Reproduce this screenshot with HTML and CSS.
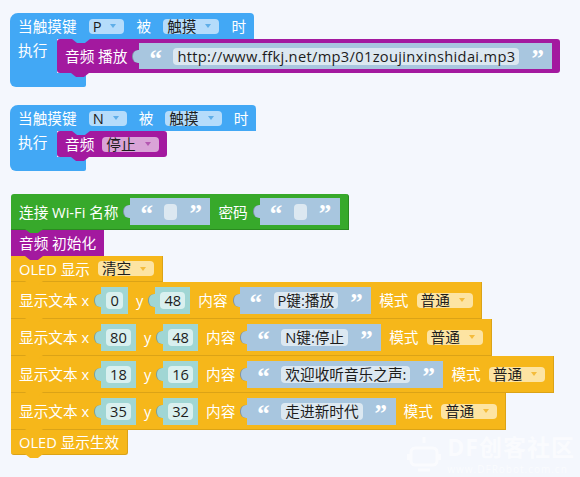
FILE: index.html
```html
<!DOCTYPE html>
<html lang="zh-CN">
  <head>
    <meta charset="UTF-8" />
    <meta name="viewport" content="width=device-width, initial-scale=1.0" />
    <title>Mind+ 触摸音乐播放</title>
    <link rel="stylesheet" href="styles.css">
  </head>
  <body>
    <div class="workspace">
      <!-- 触摸键 P：播放 mp3 -->
      <div class="c-block event">
        <div class="c-head tab">
          <span>当触摸键</span>
          <span class="dropdown">P<i class="arrow"></i></span>
          <span>被</span>
          <span class="dropdown">触摸<i class="arrow"></i></span>
          <span>时</span>
        </div>
        <div class="c-body">
          <div class="c-label">执行</div>
          <div class="block audio tall tab">
            <span>音频 播放</span>
            <span class="slot text">
              <span class="quote">“</span>
              <span class="field url">http://www.ffkj.net/mp3/01zoujinxinshidai.mp3</span>
              <span class="quote">”</span>
            </span>
          </div>
        </div>
        <div class="c-foot"></div>
      </div>

      <!-- 触摸键 N：停止 -->
      <div class="c-block event second">
        <div class="c-head tab">
          <span>当触摸键</span>
          <span class="dropdown">N<i class="arrow"></i></span>
          <span>被</span>
          <span class="dropdown">触摸<i class="arrow"></i></span>
          <span>时</span>
        </div>
        <div class="c-body">
          <div class="c-label">执行</div>
          <div class="block audio tab">
            <span>音频</span>
            <span class="dropdown">停止<i class="arrow"></i></span>
          </div>
        </div>
        <div class="c-foot"></div>
      </div>

      <!-- 初始化 -->
      <div class="stack">
        <div class="block wifi tab">
          <span>连接 Wi-Fi 名称</span>
          <span class="slot text">
            <span class="quote">“</span>
            <span class="field empty"></span>
            <span class="quote">”</span>
          </span>
          <span>密码</span>
          <span class="slot text">
            <span class="quote">“</span>
            <span class="field empty"></span>
            <span class="quote">”</span>
          </span>
        </div>
        <div class="block audio tab">
          <span>音频 初始化</span>
        </div>
        <div class="block oled tab">
          <span>OLED 显示</span>
          <span class="dropdown">清空<i class="arrow"></i></span>
        </div>
        <div class="block oled row tab">
          <span>显示文本 x</span>
          <span class="slot num"><span class="field">0</span></span>
          <span>y</span>
          <span class="slot num"><span class="field">48</span></span>
          <span>内容</span>
          <span class="slot text">
            <span class="quote">“</span>
            <span class="field">P键:播放</span>
            <span class="quote">”</span>
          </span>
          <span>模式</span>
          <span class="dropdown">普通<i class="arrow"></i></span>
        </div>
        <div class="block oled row tab">
          <span>显示文本 x</span>
          <span class="slot num"><span class="field">80</span></span>
          <span>y</span>
          <span class="slot num"><span class="field">48</span></span>
          <span>内容</span>
          <span class="slot text">
            <span class="quote">“</span>
            <span class="field">N键:停止</span>
            <span class="quote">”</span>
          </span>
          <span>模式</span>
          <span class="dropdown">普通<i class="arrow"></i></span>
        </div>
        <div class="block oled row tab">
          <span>显示文本 x</span>
          <span class="slot num"><span class="field">18</span></span>
          <span>y</span>
          <span class="slot num"><span class="field">16</span></span>
          <span>内容</span>
          <span class="slot text">
            <span class="quote">“</span>
            <span class="field">欢迎收听音乐之声:</span>
            <span class="quote">”</span>
          </span>
          <span>模式</span>
          <span class="dropdown">普通<i class="arrow"></i></span>
        </div>
        <div class="block oled row tab">
          <span>显示文本 x</span>
          <span class="slot num"><span class="field">35</span></span>
          <span>y</span>
          <span class="slot num"><span class="field">32</span></span>
          <span>内容</span>
          <span class="slot text">
            <span class="quote">“</span>
            <span class="field">走进新时代</span>
            <span class="quote">”</span>
          </span>
          <span>模式</span>
          <span class="dropdown">普通<i class="arrow"></i></span>
        </div>
        <div class="block oled tab">
          <span>OLED 显示生效</span>
        </div>
      </div>
    </div>

    <div class="watermark">
      <svg class="logo" width="34" height="36" viewBox="0 0 34 36">
        <path d="M17 1v6M8 12h18a4 4 0 0 1 4 4v9a4 4 0 0 1-4 4H8a4 4 0 0 1-4-4v-9a4 4 0 0 1 4-4zM1 18v6M33 18v6M11 34h12" fill="none" stroke="#fff" stroke-width="3"/>
      </svg>
      <div class="wm-text">
        <div class="wm-title">DF创客社区</div>
        <div class="wm-url">www.DFRobot.com.cn</div>
      </div>
    </div>
  </body>
</html>
```

FILE: styles.css
```css
* {
  box-sizing: border-box;
}
body {
  margin: 0;
  height: 477px;
  overflow: hidden;
  position: relative;
  background: #f4f7fd;
  font-family: "Open Sans", "Noto Sans CJK SC", sans-serif;
  font-size: 11pt;
  line-height: 20px;
}
.workspace {
  display: flex;
  flex-direction: column;
  align-items: flex-start;
  padding: 13px 0 0 10px;
}

/* blocks */
.block,
.c-head {
  position: relative;
  display: flex;
  align-items: center;
  gap: 8px;
  padding: 0 8px;
  color: #fff;
  white-space: nowrap;
}
.tab::after {
  content: "";
  position: absolute;
  z-index: 1;
  left: 14px;
  bottom: -4px;
  width: 18px;
  height: 4px;
  background: inherit;
  clip-path: polygon(0 0, 100% 0, 72% 100%, 28% 100%);
}

/* hat + C shape */
.c-block {
  display: flex;
  flex-direction: column;
  align-items: flex-start;
}
.c-block.second {
  margin-top: 18px;
}
.c-head {
  height: 26px;
  gap: 12px;
  background: #42a8f5;
  border-radius: 8px 4px 0 0;
}
.c-head.tab::after {
  left: 62px;
}
.c-body {
  display: flex;
  align-items: flex-start;
}
.c-label {
  align-self: stretch;
  width: 47px;
  padding: 1px 0 0 8px;
  background: #42a8f5;
  color: #fff;
}
.c-foot {
  width: 76px;
  height: 14px;
  background: #42a8f5;
  border-radius: 0 0 2px 6px;
}

/* colours per category */
.audio {
  height: 26px;
  background: #a3199f;
  border-radius: 3px;
}
.audio.tall {
  height: 34px;
}
.stack {
  display: flex;
  flex-direction: column;
  align-items: flex-start;
  margin: 23px 0 0 1px;
}
.wifi {
  height: 36px;
  background: #37a92b;
  border-right: 1px solid #2a8a20;
  border-bottom: 1px solid #2a8a20;
  border-radius: 3px 3px 0 0;
}
.stack .audio {
  border-radius: 0;
}
.oled {
  height: 26px;
  background: #f6b71a;
  border-right: 1px solid #dba317;
  border-bottom: 1px solid #dba317;
}
.oled.row {
  height: 37px;
}
.oled:last-child {
  height: 25px;
  border-radius: 0 0 3px 3px;
}

/* dropdown fields */
.dropdown {
  display: flex;
  align-items: center;
  gap: 9px;
  height: 15px;
  line-height: 15px;
  padding: 0 8px 0 4px;
  border-radius: 4px;
  color: #1c1c1c;
}
.arrow {
  width: 0;
  height: 0;
  border-left: 3px solid transparent;
  border-right: 3px solid transparent;
  border-top: 4px solid;
}
.event .dropdown {
  background: #b5dcfb;
}
.event .arrow {
  color: #5faee8;
}
.audio .dropdown {
  background: #d9a3d7;
}
.audio .arrow {
  color: #b458b1;
}
.oled .dropdown {
  background: #fde4a2;
}
.oled .arrow {
  color: #f4bc3c;
}

/* value inputs */
.slot {
  position: relative;
  display: flex;
  align-items: center;
  height: 27px;
  margin-left: 4px;
}
.slot::before {
  content: "";
  position: absolute;
  left: -7px;
  top: 7px;
  width: 8px;
  height: 13px;
  background: inherit;
  border-left: 1px solid rgba(0, 0, 0, 0.25);
  border-radius: 6px 0 0 6px;
}
.audio .slot {
  height: 26px;
}
.slot.text {
  gap: 12px;
  padding: 0 9px 0 10px;
  background: #a8c6df;
}
.slot.num {
  padding: 0 5px;
  background: #a0d6d4;
}
.field {
  height: 17px;
  line-height: 17px;
  padding: 0 4px;
  border-radius: 4px;
  background: #dce8f1;
  color: #1c1c1c;
  text-align: center;
}
.field.url {
  letter-spacing: 0.32px;
}
.num .field {
  min-width: 17px;
  background: #d9f0ef;
}
.field.empty {
  width: 13px;
  height: 16px;
  padding: 0;
}
.quote {
  width: 12px;
  height: 12px;
  margin-top: -3px;
  font-family: "Liberation Serif", serif;
  font-weight: bold;
  font-size: 25px;
  line-height: 20px;
  color: #fff;
  text-align: center;
}

/* corner mark */
.watermark {
  position: absolute;
  right: 5px;
  bottom: 2px;
  display: flex;
  align-items: center;
  gap: 6px;
  opacity: 0.6;
  color: #fff;
}
.wm-text {
  display: flex;
  flex-direction: column;
  gap: 2px;
}
.wm-title {
  font-size: 23px;
  line-height: 28px;
  font-weight: bold;
  letter-spacing: 1px;
}
.wm-url {
  font-size: 10px;
  line-height: 12px;
  letter-spacing: 1px;
}
```
